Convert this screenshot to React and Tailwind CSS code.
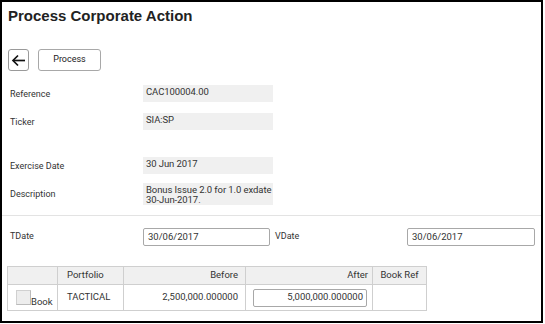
export default function App() {
  const fieldRows = [
    { label: "Reference", value: ["CAC100004.00"], mt: "mt-[14px]", h: "h-[17px]" },
    { label: "Ticker", value: ["SIA:SP"], mt: "mt-[11px]", h: "h-[17px]" },
    { label: "Exercise Date", value: ["30 Jun 2017"], mt: "mt-[27px]", h: "h-[17px]" },
    {
      label: "Description",
      value: ["Bonus Issue 2.0 for 1.0 exdate", "30-Jun-2017."],
      mt: "mt-[9px]",
      h: "h-[22px]",
    },
  ];

  return (
    <div className="w-[543px] h-[323px] border-2 border-black bg-white font-['Roboto',sans-serif] text-[9.5px] text-[#333]">
      <h1 className="pl-[6px] pt-[5px] font-['Liberation_Sans',Arial,sans-serif] font-bold text-[15px] leading-[18px] text-[#222]">
        Process Corporate Action
      </h1>

      <div className="flex gap-[9px] pl-[6px] mt-[24px]">
        <button className="w-[21px] h-[22px] border border-[#9a9a9a] rounded-[3px] flex items-center justify-center bg-white">
          <svg width="15" height="13" viewBox="0 0 15 13" fill="none" stroke="#111" strokeWidth="1.7">
            <path d="M14 6.5H2" />
            <path d="M7 1.5L2 6.5L7 11.5" />
          </svg>
        </button>
        <button className="w-[63px] h-[22px] border border-[#a8a8a8] rounded-[3px] bg-white text-[9px] text-[#222]">
          Process
        </button>
      </div>

      {fieldRows.map((r) => (
        <div key={r.label} className={`flex items-center ${r.mt}`}>
          <div className="w-[141px] pl-[8px] pt-[2px] text-[9px]">{r.label}</div>
          <div className={`w-[130px] ${r.h} bg-[#f0f0f0] px-[3px] pt-[2px] leading-[10px] self-start whitespace-nowrap tracking-[-0.08px]`}>
            {r.value.map((line) => (
              <div key={line}>{line}</div>
            ))}
          </div>
        </div>
      ))}

      <div className="mt-[10px] border-t border-[#e3e3e3]" />

      <div className="flex items-center mt-[12px]">
        <div className="w-[141px] pl-[8px] text-[9px]">TDate</div>
        <div className="w-[127px] h-[18px] border border-[#a8a8a8] rounded-[2px] px-[4px] flex items-center">
          30/06/2017
        </div>
        <div className="w-[137px] pl-[5px] text-[9px]">VDate</div>
        <div className="w-[128px] h-[18px] border border-[#a8a8a8] rounded-[2px] px-[4px] flex items-center">
          30/06/2017
        </div>
      </div>

      <table className="ml-[5px] mt-[20px] border-collapse">
        <thead>
          <tr className="bg-[#f0f0f0] h-[18px]">
            <th className="w-[50px] border border-[#cfcfcf] font-normal"></th>
            <th className="w-[66px] border border-[#cfcfcf] font-normal text-left pl-[9px]">Portfolio</th>
            <th className="w-[122px] border border-[#cfcfcf] font-normal text-right pr-[7px]">Before</th>
            <th className="w-[127px] border border-[#cfcfcf] font-normal text-right pr-[4px]">After</th>
            <th className="w-[54px] border border-[#cfcfcf] font-normal text-center">Book Ref</th>
          </tr>
        </thead>
        <tbody>
          <tr className="h-[26px]">
            <td className="border border-[#cfcfcf] pl-[8px]">
              <div className="flex items-end">
                <span className="w-[15px] h-[15px] bg-[#ededed] border-t border-l border-[#d0d0d0] border-r border-b border-r-[#bbb] border-b-[#bbb] inline-block" />
                <span className="leading-[10px] -mb-[2px]">Book</span>
              </div>
            </td>
            <td className="border border-[#cfcfcf] pl-[9px]">TACTICAL</td>
            <td className="border border-[#cfcfcf] text-right pr-[7px]">2,500,000.000000</td>
            <td className="border border-[#cfcfcf] pl-[7px] pr-[5px]">
              <div className="h-[18px] border border-[#a8a8a8] rounded-[2px] flex items-center justify-end pr-[3px]">
                5,000,000.000000
              </div>
            </td>
            <td className="border border-[#cfcfcf]"></td>
          </tr>
        </tbody>
      </table>
    </div>
  );
}
